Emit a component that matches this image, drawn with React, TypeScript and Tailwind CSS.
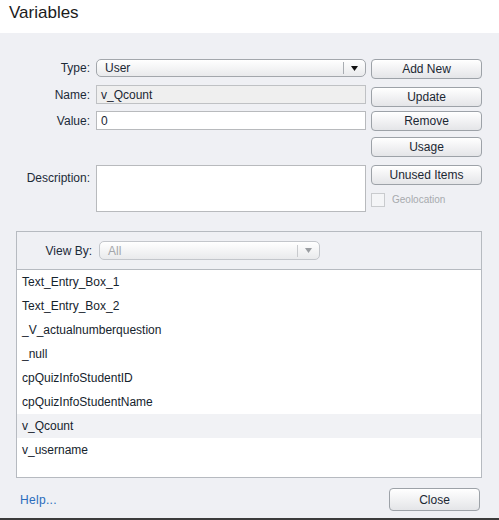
import React from 'react';

const variables = [
    'Text_Entry_Box_1',
    'Text_Entry_Box_2',
    '_V_actualnumberquestion',
    '_null',
    'cpQuizInfoStudentID',
    'cpQuizInfoStudentName',
    'v_Qcount',
    'v_username',
];

const btn =
    'flex items-center justify-center rounded-[4px] border border-[#9da2a8] bg-linear-to-b from-white to-[#e4e5e8] text-[12px] text-[#1b2733] shadow-[inset_0_1px_0_#ffffff]';

const Arrow: React.FC<{ color: string }> = ({ color }) => (
    <svg width="7" height="5" viewBox="0 0 7 5">
        <path d="M0 0 L7 0 L3.5 5 Z" fill={color} />
    </svg>
);

const Select: React.FC<{ value: string; disabled?: boolean; className: string }> = ({ value, disabled, className }) => (
    <div
        className={`flex items-center rounded-[5px] border ${disabled ? 'border-[#c3c6cb] text-[#a3a6aa]' : 'border-[#a3a7ac] text-[#1b2733]'} bg-linear-to-b from-white to-[#e9eaec] ${className}`}
    >
        <span className="flex-1 pl-[8px] text-[12px] leading-none">{value}</span>
        <span className={`h-[12px] w-px ${disabled ? 'bg-[#c8cacd]' : 'bg-[#a9adb2]'}`} />
        <span className="flex w-[21px] justify-center">
            <Arrow color={disabled ? '#9a9da1' : '#111111'} />
        </span>
    </div>
);

const App: React.FC = () => {
    return (
        <div className="flex h-[520px] w-[499px] flex-col bg-white font-['Liberation_Sans',Arial,sans-serif]">
            {/* Title */}
            <div className="h-[33px] pl-[9px] pt-[1px] text-[17px] leading-[24px] text-[#1b1b1b]">Variables</div>

            <div className="flex flex-1 flex-col bg-[#eff0f4] pt-[26px]">
                {/* Form */}
                <div className="flex">
                    <div className="flex w-[366px] flex-col text-[12px] text-[#1c2a38]">
                        <div className="flex h-[18px] items-center">
                            <span className="w-[90px] text-right">Type:</span>
                            <Select value="User" className="ml-[6px] h-[18px] w-[270px]" />
                        </div>
                        <div className="mt-[8px] flex h-[19px] items-center">
                            <span className="w-[90px] text-right">Name:</span>
                            <div className="ml-[6px] flex h-[19px] w-[270px] items-center border border-[#bfc1c4] bg-[#efefef] pl-[4px] text-[#1b2733]">
                                v_Qcount
                            </div>
                        </div>
                        <div className="mt-[7px] flex h-[19px] items-center">
                            <span className="w-[90px] text-right">Value:</span>
                            <div className="ml-[6px] flex h-[19px] w-[270px] items-center border border-[#b8babd] bg-white pl-[4px] text-[#1b2733]">
                                0
                            </div>
                        </div>
                        <div className="mt-[35px] flex items-start">
                            <span className="w-[90px] pt-[4px] text-right">Description:</span>
                            <div className="ml-[6px] h-[47px] w-[270px] border border-[#b8babd] bg-white" />
                        </div>
                    </div>

                    <div className="ml-[5px] flex w-[111px] flex-col">
                        <div className={`${btn} h-[20px]`}>Add New</div>
                        <div className={`${btn} mt-[8px] h-[20px]`}>Update</div>
                        <div className={`${btn} mt-[4px] h-[20px]`}>Remove</div>
                        <div className={`${btn} mt-[6px] h-[20px]`}>Usage</div>
                        <div className={`${btn} mt-[8px] h-[20px]`}>Unused Items</div>
                        <div className="mt-[7px] flex items-center">
                            <span className="h-[14px] w-[14px] border border-[#c9cbce] bg-[#f4f5f7]" />
                            <span className="ml-[7px] text-[10px] text-[#a7aaae]">Geolocation</span>
                        </div>
                    </div>
                </div>

                {/* Variables list panel */}
                <div className="ml-[16px] mt-[19px] flex w-[466px] flex-col border border-[#b6bac0]">
                    <div className="flex h-[37px] items-start pt-[9px] text-[12px] text-[#1c2a38]">
                        <span className="flex h-[19px] w-[75px] items-center justify-end">View By:</span>
                        <Select value="All" disabled className="ml-[7px] h-[19px] w-[221px]" />
                    </div>
                    <div className="h-[208px] border-t border-[#b6bac0] bg-white">
                        {variables.map((name) => (
                            <div
                                key={name}
                                className={`flex h-[24px] items-center pl-[5px] text-[12px] text-[#15232d] ${name === 'v_Qcount' ? 'bg-[#f1f2f5]' : ''}`}
                            >
                                {name}
                            </div>
                        ))}
                    </div>
                </div>

                {/* Footer */}
                <div className="mt-[10px] flex items-center justify-between pl-[20px] pr-[19px]">
                    <span className="text-[12px] tracking-[0.3px] text-[#2a6cbc]">Help...</span>
                    <div className={`${btn} h-[23px] w-[91px]`}>Close</div>
                </div>
            </div>
            <div className="h-[2px] bg-[#3b3b3b]" />
        </div>
    );
};

export default App;
